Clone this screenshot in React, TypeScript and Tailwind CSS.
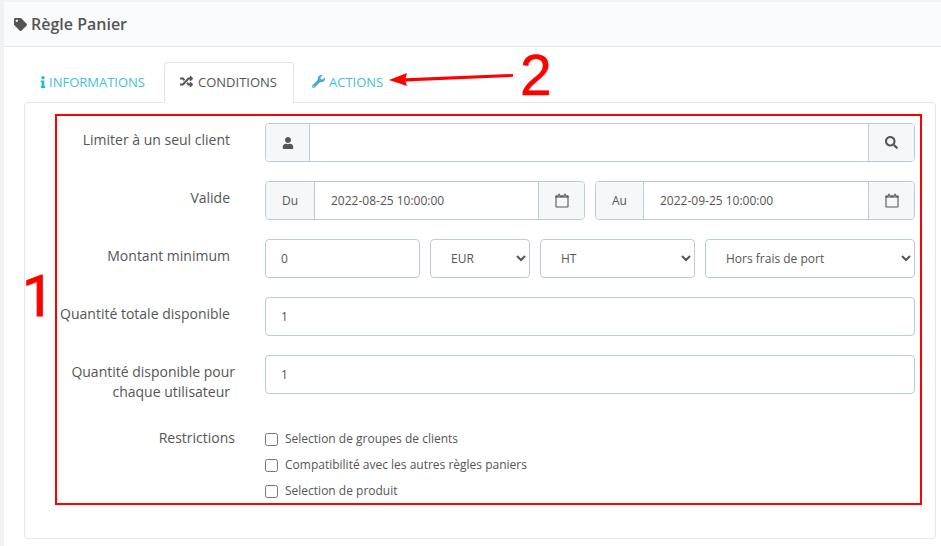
import React from "react";
import { FaTag, FaInfo, FaRandom, FaWrench, FaUser, FaSearch } from "react-icons/fa";

const Addon = ({ children, className = "" }: { children: React.ReactNode; className?: string }) => (
  <span className={`flex items-center justify-center bg-[#f5f8f9] text-[#555555] text-[12px] shrink-0 ${className}`}>{children}</span>
);

const CalendarIcon = () => (
  <svg width="14" height="15" viewBox="0 0 14 15" fill="none">
    <rect x="1" y="3" width="12" height="11" rx="0.6" stroke="#555555" strokeWidth="1.1" />
    <rect x="0.5" y="2.6" width="13" height="2" fill="#555555" />
    <rect x="3" y="0.5" width="2" height="3.5" rx="0.8" fill="#555555" stroke="#f5f8f9" strokeWidth="0.4" />
    <rect x="9" y="0.5" width="2" height="3.5" rx="0.8" fill="#555555" stroke="#f5f8f9" strokeWidth="0.4" />
  </svg>
);

const inputCls = "h-[39px] border border-[#bbcdd2] rounded-[4px] bg-white text-[12px] text-[#555555] px-[15px] outline-none";
const selCls = "h-[39px] border border-[#bbcdd2] rounded-[4px] bg-white text-[12px] text-[#555555] pl-[16px] outline-none";

const DateField = ({ label, value, lw }: { label: string; value: string; lw: string }) => (
  <div className="flex h-[39px] w-[320px] border border-[#bbcdd2] rounded-[4px] overflow-hidden">
    <Addon className={`border-r border-[#bbcdd2] ${lw}`}>{label}</Addon>
    <span className="flex-1 flex items-center pl-[16px] text-[12px] text-[#555555]">{value}</span>
    <Addon className="border-l border-[#bbcdd2] w-[46px]"><CalendarIcon /></Addon>
  </div>
);

const Row = ({ label, children }: { label: React.ReactNode; children: React.ReactNode }) => (
  <div className="flex">
    <div className="w-[205px] text-right text-[14px] leading-[20px] pt-[7px] text-[#555555] shrink-0">{label}</div>
    <div className="ml-[35px] w-[650px]">{children}</div>
  </div>
);

const Check = ({ label }: { label: string }) => (
  <label className="flex items-center h-[26px] text-[12px] text-[#555555]">
    <input type="checkbox" className="w-[13px] h-[13px] m-0 mr-[7px]" />
    {label}
  </label>
);

export default function App() {
  return (
    <div className="relative h-[546px] w-[941px] overflow-hidden bg-[#eff1f2] pl-[4px] pt-[2px] font-['Open_Sans',sans-serif]">
      <div className="h-[544px] bg-white rounded-tl-[3px]">
        <div className="h-[45px] flex items-center bg-[#fafbfc] border-b border-[#e3eaec] pl-[10px] text-[#555555]">
          <FaTag size={13} className="mr-[4px]" />
          <span className="text-[16px] font-semibold">Règle Panier</span>
        </div>
        <div className="pl-[20px] pt-[15px] pr-[5px]">
          <div className="flex h-[41px] text-[13px] leading-[20px]">
            <div className="flex items-center pb-[2px] pl-[13px] pr-[19px] text-[#3fc1db]">
              <FaInfo size={12} className="text-[#25b9d7]" />INFORMATIONS
            </div>
            <div className="relative z-10 flex items-center pb-[2px] w-[130px] pl-[15px] border border-[#dbe6e9] border-b-white rounded-t-[4px] bg-white text-[#555555]">
              <FaRandom size={13} className="mr-[5px]" />CONDITIONS
            </div>
            <div className="flex items-center pb-[2px] pl-[18px] text-[#3fc1db]">
              <FaWrench size={13} className="mr-[4px] text-[#4aa9cf]" />ACTIONS
            </div>
          </div>
          <div className="-mt-px h-[437px] w-[912px] border border-[#e4e8ea] rounded-[4px] pt-[20px] flex flex-col gap-[19px]">
            <Row label="Limiter à un seul client">
              <div className="flex h-[39px] border border-[#bbcdd2] rounded-[4px] overflow-hidden">
                <Addon className="border-r border-[#bbcdd2] w-[44px]"><FaUser size={12} /></Addon>
                <span className="flex-1" />
                <Addon className="border-l border-[#bbcdd2] w-[46px]"><FaSearch size={13} /></Addon>
              </div>
            </Row>
            <Row label="Valide">
              <div className="flex gap-[10px]">
                <DateField label="Du" value="2022-08-25 10:00:00" lw="w-[49px]" />
                <DateField label="Au" value="2022-09-25 10:00:00" lw="w-[48px]" />
              </div>
            </Row>
            <Row label="Montant minimum">
              <div className="flex gap-[10px]">
                <input className={`${inputCls} w-[155px]`} defaultValue="0" />
                <select className={`${selCls} w-[100px]`}><option>EUR</option></select>
                <select className={`${selCls} w-[155px]`}><option>HT</option></select>
                <select className={`${selCls} w-[210px]`}><option>Hors frais de port</option></select>
              </div>
            </Row>
            <Row label="Quantité totale disponible">
              <input className={`${inputCls} w-full`} defaultValue="1" />
            </Row>
            <Row label={<><span className="block -mr-[5px]">Quantité disponible pour</span><span className="block">chaque utilisateur</span></>}>
              <input className={`${inputCls} w-full`} defaultValue="1" />
            </Row>
            <Row label={<span className="block -mr-[5px]">Restrictions</span>}>
              <div className="mt-[5px] flex flex-col">
                <Check label="Selection de groupes de clients" />
                <Check label="Compatibilité avec les autres règles paniers" />
                <Check label="Selection de produit" />
              </div>
            </Row>
          </div>
        </div>
      </div>

      <div className="absolute left-[55px] top-[114px] w-[867px] h-[391px] border-2 border-[#ff0000] pointer-events-none" />
      <span className="absolute left-[22px] top-[262px] text-[57px] leading-[70px] text-[#ff0000] [-webkit-text-stroke:1px_#ff0000] font-['Roboto',sans-serif]">1</span>
      <span className="absolute left-[520px] top-[40px] text-[57px] leading-[70px] text-[#ff0000] [-webkit-text-stroke:0.5px_#ff0000] font-['Liberation_Sans',sans-serif]">2</span>
      <svg className="absolute left-[388px] top-[70px]" width="128" height="20" viewBox="0 0 128 20">
        <path d="M1 10 L19 3 L17.5 8.2 L125 4 L125 6.8 L17.5 11.5 L19 16 Z" fill="#ff0000" />
      </svg>
    </div>
  );
}
